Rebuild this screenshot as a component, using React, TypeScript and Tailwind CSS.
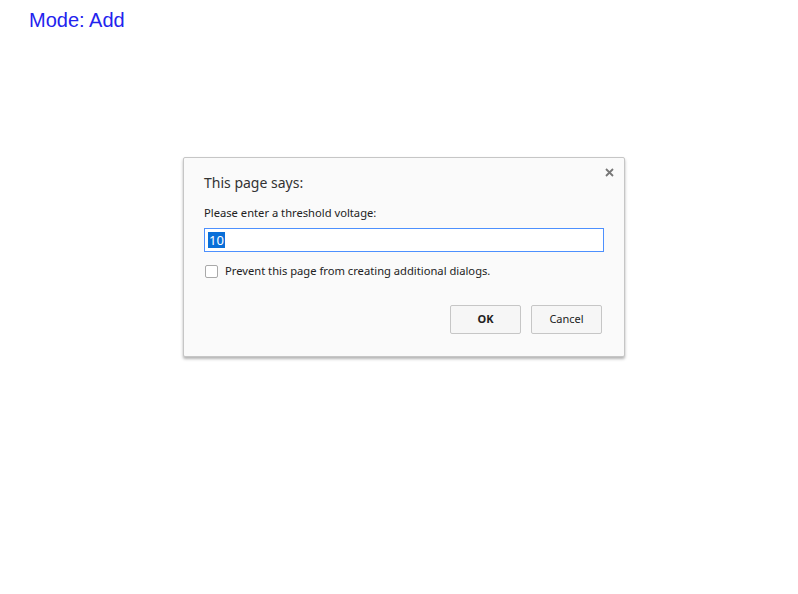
export default function App() {
  return (
    <div className="relative h-[594px] w-[798px] bg-white font-['Liberation_Sans',Arial,sans-serif]">
      <p className="pl-[29px] pt-[8px] text-[20px] leading-[24px] text-[#2323ee]">Mode: Add</p>

      <div className="absolute left-[183px] top-[157px] w-[442px] rounded-[2px] border border-[#c6c6c6] bg-[#fafafa] pb-[22px] pl-[20px] pr-[20px] pt-[16px] font-['Noto_Sans','Open_Sans',sans-serif] text-[#333] shadow-[0_2px_3px_rgba(0,0,0,0.3)]">
        <button className="absolute right-[10px] top-[9px] flex h-[10px] w-[10px] items-center justify-center text-[#777]">
          <svg width="9" height="9" viewBox="0 0 9 9">
            <path d="M1 1L8 8M8 1L1 8" stroke="#777" strokeWidth="1.8" />
          </svg>
        </button>
        <h2 className="text-[14px] leading-[18px] text-[#333]">This page says:</h2>
        <p className="mt-[13px] text-[11.2px] leading-[16px] text-[#222]">Please enter a threshold voltage:</p>
        <div className="mt-[7px] flex h-[24px] w-[400px] items-center border border-[#4d90fe] bg-white pl-[3px]">
          <span className="bg-[#0a6fd8] px-[1px] text-[13px] leading-[16px] text-white">10</span>
        </div>
        <label className="mt-[12px] flex items-center gap-[7px] text-[11.2px] leading-[14px] text-[#222]">
          <span className="ml-[1px] h-[13px] w-[13px] rounded-[2px] border border-[#a9a9a9] bg-white" />
          Prevent this page from creating additional dialogs.
        </label>
        <div className="mt-[27px] flex justify-end gap-[10px] pr-[2px]">
          <button className="h-[29px] w-[71px] rounded-[2px] border border-[#c6c6c6] bg-[#f6f6f6] text-[11px] font-bold text-[#222]">
            OK
          </button>
          <button className="h-[29px] w-[71px] rounded-[2px] border border-[#c6c6c6] bg-[#f6f6f6] text-[11px] text-[#222]">
            Cancel
          </button>
        </div>
      </div>
    </div>
  );
}
